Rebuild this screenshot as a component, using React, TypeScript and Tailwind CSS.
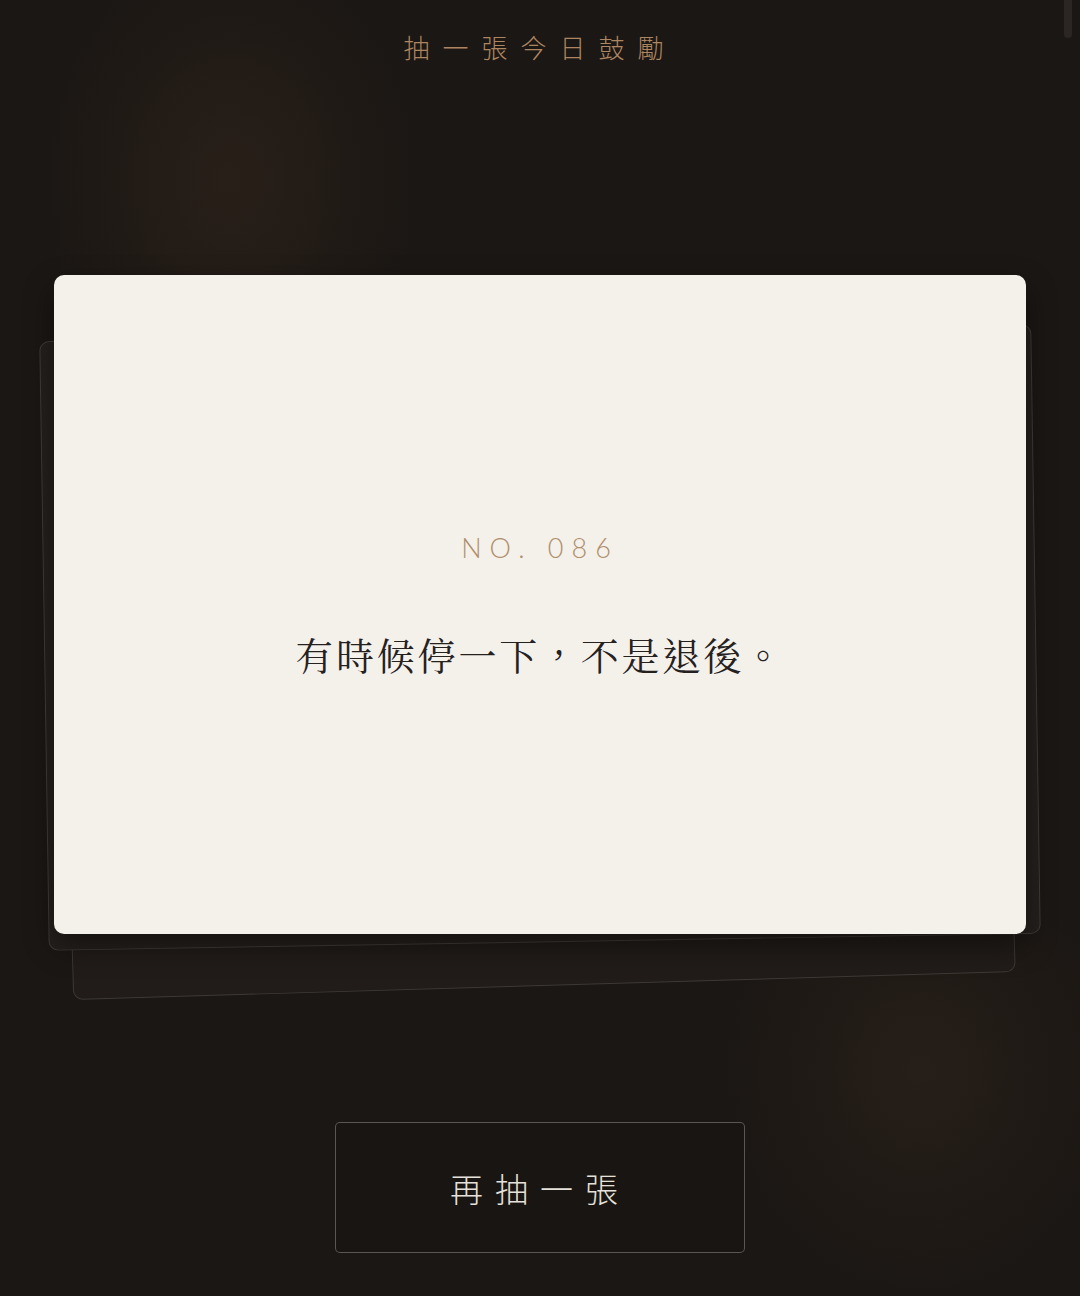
import React from "react";

const cjkSans = "font-['Noto_Sans_CJK_TC','Noto_Sans_CJK_SC',sans-serif]";

export default function App() {
  return (
    <div className="relative w-full h-[1296px] overflow-hidden bg-[#1b1714]">
      {/* ambient glows */}
      <div className="absolute left-[40px] top-[-60px] w-[380px] h-[480px] rounded-full bg-[radial-gradient(ellipse_at_center,rgba(88,60,40,0.22),rgba(27,23,20,0)_70%)]" />
      <div className="absolute left-[720px] top-[840px] w-[400px] h-[460px] rounded-full bg-[radial-gradient(ellipse_at_center,rgba(78,56,40,0.22),rgba(27,23,20,0)_70%)]" />
      {/* scrollbar thumb */}
      <div className="absolute right-[8px] top-0 w-[8px] h-[38px] rounded-b-full bg-[#2b2623]" />

      <div className="relative flex flex-col items-center">
        <h1
          className={`pt-[31px] text-[26px] leading-[32px] tracking-[13px] font-light text-[#ad8560] ${cjkSans}`}
        >
          抽一張今日鼓勵
        </h1>

        <div className="relative mt-[212px] w-[972px] h-[659px]">
          {/* back card 2 */}
          <div className="absolute inset-0 rounded-[10px] border border-[rgba(255,255,255,0.13)] bg-[#211c19] [transform:translate(-5px,62px)_rotate(-1.7deg)_scale(0.97)]" />
          {/* back card 1 */}
          <div className="absolute inset-0 rounded-[10px] border border-[rgba(255,255,255,0.13)] bg-[#24201d] [transform:matrix(1.0206,-0.0175,0.0144,0.925,0,33)]" />
          {/* front card */}
          <div className="relative h-full w-full rounded-[10px] bg-[#f4f0ea] shadow-[0_12px_30px_rgba(0,0,0,0.45)] flex flex-col items-center justify-center gap-[70px]">
            <div className="text-[27px] leading-[28px] tracking-[8px] font-light text-[#b08e6c] font-['Lato','Noto_Sans',sans-serif]">
              NO. 086
            </div>
            <div className="text-[38px] leading-[44px] tracking-[2.8px] text-[#25211e] font-['Noto_Serif_CJK_TC','Noto_Serif_CJK_SC','Noto_Sans_CJK_TC',serif]">
              有時候停一下，不是退後。
            </div>
          </div>
        </div>

        <button
          className={`mt-[188px] w-[410px] h-[131px] rounded-[5px] border border-[rgba(255,255,255,0.28)] bg-[#191513] text-[33px] leading-[40px] tracking-[12px] font-light text-[#e6e1da] ${cjkSans}`}
        >
          再抽一張
        </button>
      </div>
    </div>
  );
}
